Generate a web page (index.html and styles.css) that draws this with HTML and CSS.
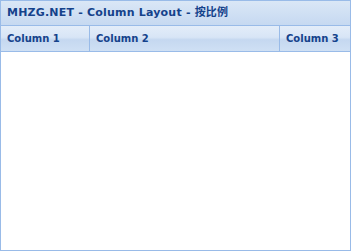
FILE: index.html
```html
<!DOCTYPE html>
<html>
<head>
<meta charset="utf-8">
<link rel="stylesheet" href="styles.css">
</head>
<body>
<div class="panel">
  <div class="panel-header">MHZG.NET - Column Layout - 按比例</div>
  <div class="grid-header">
    <div class="col c1">Column 1</div>
    <div class="col c2">Column 2</div>
    <div class="col c3">Column 3</div>
  </div>
  <div class="panel-body"></div>
</div>
</body>
</html>
```

FILE: styles.css
```css
html, body { margin: 0; padding: 0; background: #fff; }
.panel {
  width: 349px;
  height: 249px;
  border: 1px solid #99bbe8;
  display: flex;
  flex-direction: column;
  font-family: "DejaVu Sans", "Noto Sans CJK SC", sans-serif;
}
.panel-header {
  height: 24px;
  line-height: 24px;
  padding-left: 6px;
  font-size: 11px;
  font-weight: bold;
  letter-spacing: 0.2px;
  color: #15428b;
  background: linear-gradient(#dae7f6, #c6d9f1);
  border-bottom: 1px solid #99bbe8;
}
.grid-header {
  display: flex;
  height: 25px;
  border-bottom: 1px solid #99bbe8;
  background: linear-gradient(#e3edf9 0%, #d8e5f6 45%, #c5d8f0 55%, #cfe0f4 100%);
}
.col {
  line-height: 25px;
  padding-left: 6px;
  font-size: 10px;
  font-weight: bold;
  color: #15428b;
  border-right: 1px solid #99bbe8;
  box-sizing: border-box;
}
.c1 { width: 89px; }
.c2 { flex: 1; }
.c3 { width: 70px; border-right: none; }
.panel-body { flex: 1; background: #fff; }
```
